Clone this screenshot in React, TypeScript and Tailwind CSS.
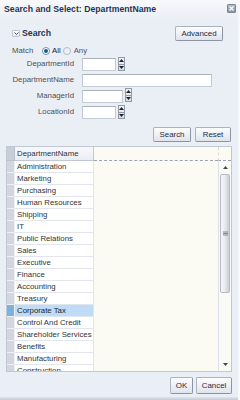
import React from "react"

const rows = [
  "Administration",
  "Marketing",
  "Purchasing",
  "Human Resources",
  "Shipping",
  "IT",
  "Public Relations",
  "Sales",
  "Executive",
  "Finance",
  "Accounting",
  "Treasury",
  "Corporate Tax",
  "Control And Credit",
  "Shareholder Services",
  "Benefits",
  "Manufacturing",
  "Construction",
]

const Spinner = ({ up = 0 }: { up?: number }) => (
  <div
    className="flex flex-col w-[7px] h-[14px] ml-[2px] border border-[#8f99a8] bg-gradient-to-b from-[#f4f6f9] to-[#d9dee6]"
    style={{ marginTop: -up }}
  >
    <div className="flex-1 flex items-center justify-center border-b border-[#8f99a8]">
      <svg width="5" height="3" viewBox="0 0 5 3"><path d="M2.5 0L5 3H0z" fill="#222" /></svg>
    </div>
    <div className="flex-1 flex items-center justify-center">
      <svg width="5" height="3" viewBox="0 0 5 3"><path d="M0 0H5L2.5 3z" fill="#222" /></svg>
    </div>
  </div>
)

const Btn = ({ label, w, h = "h-[15px]" }: { label: string; w: string; h?: string }) => (
  <div
    className={`${w} ${h} flex items-center justify-center rounded-[2px] border border-[#aab3c1] border-r-[#8a94a3] border-b-[#8a94a3] bg-gradient-to-b from-[#fdfdfe] to-[#dfe4ec] text-[7.9px] text-[#1e2d44]`}
  >
    {label}
  </div>
)

const Field = ({ label, children }: { label: string; children: React.ReactNode }) => (
  <div className="flex items-center h-[16px]">
    <div className="w-[74px] text-right text-[7.8px] text-[#505050] whitespace-nowrap">{label}</div>
    <div className="ml-[8px] flex items-center">{children}</div>
  </div>
)

const Input = ({ w }: { w: string }) => (
  <div className={`${w} h-[13px] bg-white border border-[#c3cad5] border-t-[#aab2be]`} />
)

export default function App() {
  return (
    <div
      className="w-[240px] h-[400px] bg-[#eaeef5] flex flex-col overflow-hidden border-r-2 border-[#f7f8fb]"
      style={{ fontFamily: "'Liberation Sans', Arial, sans-serif" }}
    >
      {/* Title bar */}
      <div className="h-[20px] shrink-0 flex items-center justify-between pl-[4px] pr-[2px] bg-gradient-to-b from-[#f7f9fc] to-[#eaeef5]">
        <span className="text-[8.7px] font-bold text-[#1f3553] whitespace-nowrap">Search and Select: DepartmentName</span>
        <div className="w-[9px] h-[9px] -mt-[4px] rounded-[1px] bg-gradient-to-b from-[#b3bbc7] to-[#8993a1] border border-[#7c8695] flex items-center justify-center">
          <svg width="5" height="5" viewBox="0 0 5 5"><path d="M0.5 0.5L4.5 4.5M4.5 0.5L0.5 4.5" stroke="#fff" strokeWidth="1.2" /></svg>
        </div>
      </div>

      {/* Search header */}
      <div className="flex items-center justify-between pl-[12px] pr-[15px] mt-[6px] h-[15px] shrink-0">
        <div className="flex items-center gap-[2px]">
          <div className="w-[8px] h-[7px] rounded-[1px] border border-[#c0c8d3] bg-gradient-to-b from-white to-[#e3e8ef] flex items-center justify-center">
            <svg width="5" height="3" viewBox="0 0 5 3"><path d="M0.5 0.5L2.5 2.5L4.5 0.5" stroke="#4a5466" strokeWidth="1" fill="none" /></svg>
          </div>
          <span className="text-[8.7px] font-bold text-[#1f3553]">Search</span>
        </div>
        <Btn label="Advanced" w="w-[48px]" />
      </div>

      {/* Match */}
      <div className="flex items-center h-[11px] mt-[4px] pl-[12px] text-[7.8px] shrink-0">
        <span className="text-[#505050] w-[30px]">Match</span>
        <div className="flex items-center gap-[2px]">
          <div className="w-[8px] h-[8px] rounded-full border border-[#7f8fa5] bg-white flex items-center justify-center">
            <div className="w-[4px] h-[4px] rounded-full bg-[#1c5a96]" />
          </div>
          <span className="text-[#1a1a1a]">All</span>
        </div>
        <div className="flex items-center gap-[3px] ml-[2px]">
          <div className="w-[8px] h-[8px] rounded-full border border-[#b5bcc7] bg-[#eef0f3]" />
          <span className="text-[#505050]">Any</span>
        </div>
      </div>

      {/* Fields */}
      <div className="flex flex-col shrink-0">
        <Field label="DepartmentId">
          <Input w="w-[34px]" />
          <Spinner />
        </Field>
        <Field label="DepartmentName">
          <Input w="w-[130px]" />
        </Field>
        <Field label="ManagerId">
          <Input w="w-[41px]" />
          <Spinner up={2} />
        </Field>
        <Field label="LocationId">
          <Input w="w-[34px]" />
          <Spinner />
        </Field>
      </div>

      {/* Search / Reset */}
      <div className="flex justify-end gap-[4px] pr-[7px] mt-[7px] shrink-0">
        <Btn label="Search" w="w-[38px]" />
        <Btn label="Reset" w="w-[36px]" />
      </div>

      {/* Table */}
      <div className="ml-[6px] mr-[6px] mt-[4px] h-[226px] shrink-0 border border-[#c1c8d3] bg-[#fbfbf4] flex flex-col overflow-hidden">
        <div className="flex h-[14px] shrink-0">
          <div className="w-[8px] bg-[#c8ced8] border-r border-b border-[#b9c0cb]" />
          <div className="w-[79px] px-[2px] text-[7.8px] leading-[13px] text-[#333] border-r border-b border-[#c1c8d3] bg-gradient-to-b from-[#f7f8fb] to-[#e9edf3] whitespace-nowrap">
            DepartmentName
          </div>
          <div className="flex-1 border-b border-dashed border-[#9aa2ae]" />
          <div className="w-[13px] border-l border-[#d3d8df] border-b border-dashed border-b-[#9aa2ae]" />
        </div>
        <div className="flex flex-1 min-h-0">
          <div className="flex flex-col">
            {rows.map((r) => {
              const sel = r === "Corporate Tax"
              return (
                <div key={r} className="flex h-[12px] shrink-0">
                  <div className={`w-[8px] border-r border-b border-[#eef0f4] ${sel ? "bg-[#7fb0e2]" : "bg-[#d2d7df]"}`} />
                  <div
                    className={`w-[79px] px-[2px] text-[7.8px] leading-[11px] whitespace-nowrap overflow-hidden border-b border-r border-[#e2e6ec] ${
                      sel ? "bg-[#bedcf8] text-[#222]" : "bg-white text-[#333]"
                    }`}
                  >
                    {r}
                  </div>
                </div>
              )
            })}
          </div>
          <div className="flex-1" />
          {/* Scrollbar */}
          <div className="w-[13px] flex flex-col items-center border-l border-[#dde1e7] bg-[#fafaf6]">
            <div className="h-[13px] flex items-center justify-center">
              <svg width="5" height="3" viewBox="0 0 5 3"><path d="M2.5 0L5 3H0z" fill="#444" /></svg>
            </div>
            <div className="w-[10px] h-[119px] rounded-[2px] border border-[#b6bcc6] bg-gradient-to-r from-[#f6f7f9] via-[#e8eaee] to-[#c9ced6] flex items-center justify-center">
              <svg width="5" height="5" viewBox="0 0 5 5"><path d="M0 1H5M0 2.5H5M0 4H5" stroke="#6d737c" strokeWidth="0.8" /></svg>
            </div>
            <div className="flex-1" />
            <div className="h-[13px] flex items-center justify-center">
              <svg width="5" height="3" viewBox="0 0 5 3"><path d="M0 0H5L2.5 3z" fill="#444" /></svg>
            </div>
          </div>
        </div>
      </div>

      {/* Footer */}
      <div className="flex justify-end gap-[3px] pr-[6px] mt-[5px] shrink-0">
        <Btn label="OK" w="w-[23px]" h="h-[17px]" />
        <Btn label="Cancel" w="w-[36px]" h="h-[17px]" />
      </div>
      <div className="flex-1" />
      <div className="h-[3px] shrink-0 bg-gradient-to-b from-[#e0e5ed] to-[#c4cbd6]" />
    </div>
  )
}
